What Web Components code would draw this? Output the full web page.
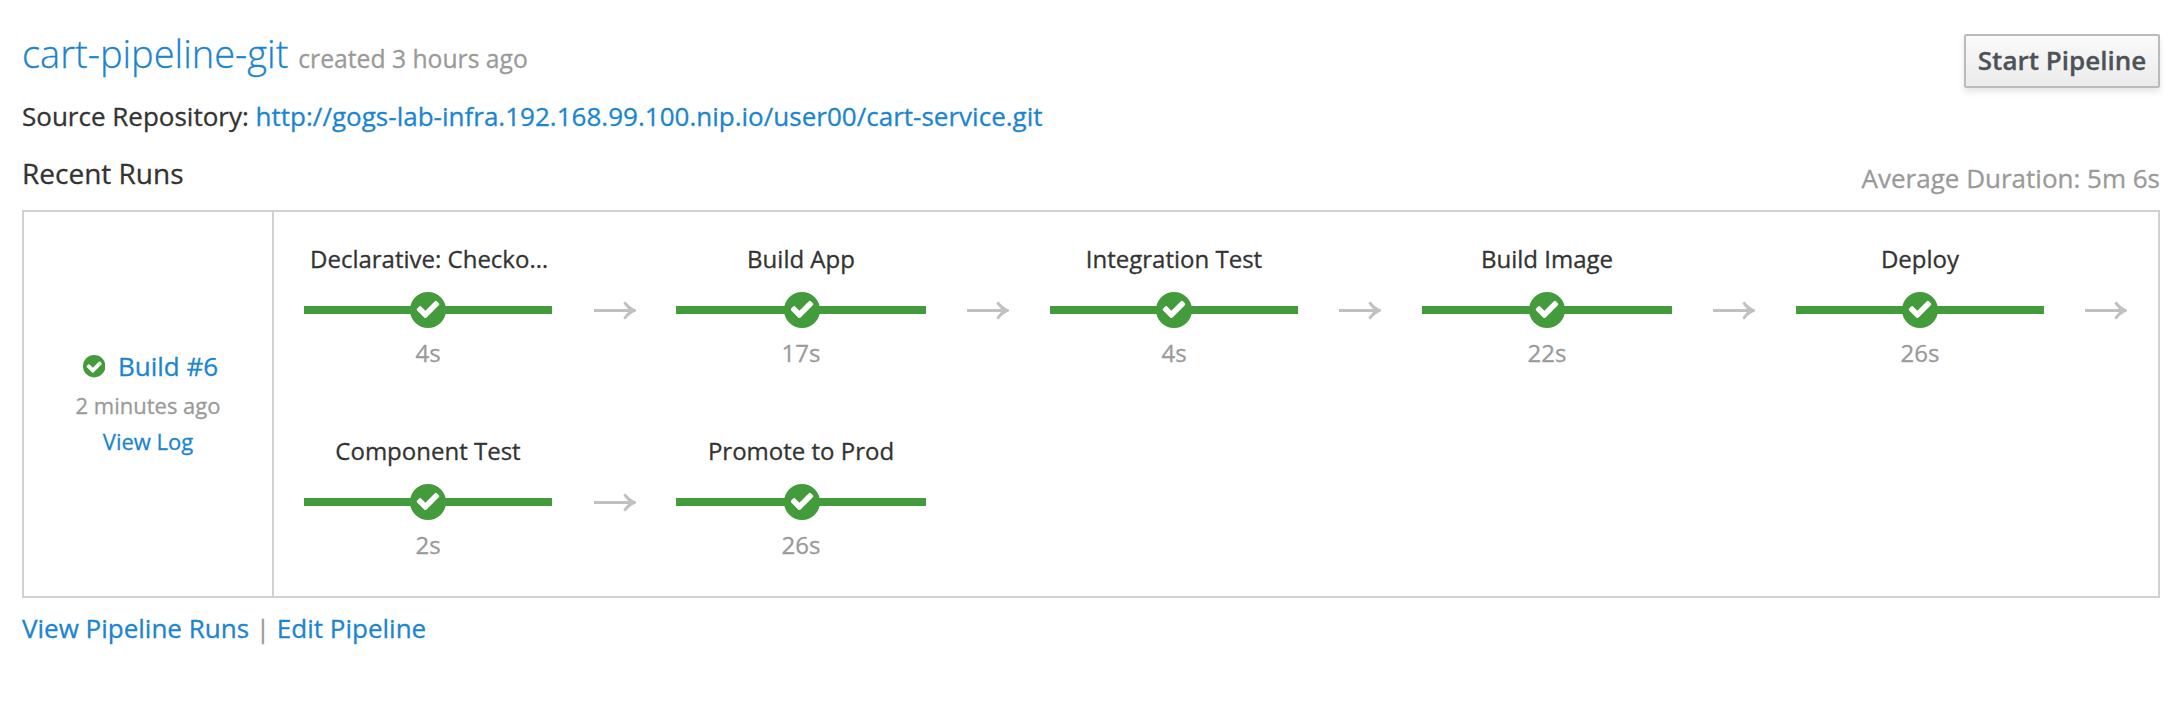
<!DOCTYPE html>
<html lang="en">
<head>
<meta charset="utf-8">
<title>Pipelines</title>
<style>
  body { margin: 0; background: #fff; font-family: "Open Sans", sans-serif; font-size: 26px; line-height: 44px; color: #333;
    -webkit-text-stroke: .3px;
    --link: #1b85d0; --muted: #9a9a9a; --line: #d1d1d1; --ok: #449b3b; }
</style>
</head>
<body>
<pipeline-card>
  <pipeline-heading slot="title" age="created 3 hours ago">cart-pipeline-git</pipeline-heading>
  <action-button slot="action">Start Pipeline</action-button>
  <span slot="source">Source Repository: <text-link style="letter-spacing:.012px">http://gogs-lab-infra.192.168.99.100.nip.io/user00/cart-service.git</text-link></span>
  <span slot="average">Average Duration: 5m 6s</span>
  <pipeline-run slot="runs" name="Build #6" age="2 minutes ago">
    <pipeline-stage duration="4s">Declarative: Checkout SCM</pipeline-stage>
    <pipeline-stage duration="17s">Build App</pipeline-stage>
    <pipeline-stage duration="4s">Integration Test</pipeline-stage>
    <pipeline-stage duration="22s">Build Image</pipeline-stage>
    <pipeline-stage duration="26s">Deploy</pipeline-stage>
    <pipeline-stage duration="2s">Component Test</pipeline-stage>
    <pipeline-stage duration="26s" last>Promote to Prod</pipeline-stage>
  </pipeline-run>
  <text-link slot="links">View Pipeline Runs</text-link>
  <text-link slot="links">Edit Pipeline</text-link>
</pipeline-card>
<script>
const define = (name, render) => customElements.define(name, class extends HTMLElement {
  constructor() {
    super();
    this.attachShadow({ mode: 'open' });
  }
  connectedCallback() {
    this.shadowRoot.innerHTML = render(this);
  }
});

define('text-link', () => `
  <style>:host { display: inline; color: var(--link); cursor: pointer; }</style><slot></slot>`);

define('pipeline-heading', el => `
  <style>
    :host { display: block; font-size: 38px; font-weight: 300; line-height: 46px; white-space: nowrap; color: var(--link); }
    small { font-size: 24.7px; font-weight: 400; color: var(--muted); }
  </style><slot></slot> <small>${el.getAttribute('age')}</small>`);

define('action-button', () => `
  <style>
    :host { display: block; }
    button { display: block; box-sizing: border-box; width: 196px; height: 54px; padding: 0 0 2px; margin: 0;
      border: 2px solid #bbb; border-radius: 2px; font: 600 26px/44px "Open Sans", sans-serif; color: #4d5258;
      background: linear-gradient(#fafafa, #ebebeb); box-shadow: 0 4px 6px rgba(3, 3, 3, .1); white-space: nowrap; }
  </style><button><slot></slot></button>`);

define('pipeline-card', () => `
  <style>
    :host { display: block; padding: 30px 20px 0 22px; }
    header { display: flex; justify-content: space-between; align-items: flex-start; height: 64px; }
    ::slotted([slot=action]) { margin-top: 4px; }
    .source { height: 57px; }
    .bar { display: flex; justify-content: space-between; height: 59px; }
    h3 { margin: 0; font-size: 28px; font-weight: 400; }
    .avg { margin-top: 5px; color: var(--muted); }
    footer { margin-top: 8px; }
    .sep { color: var(--muted); }
  </style>
  <header><slot name="title"></slot><slot name="action"></slot></header>
  <div class="source"><slot name="source"></slot></div>
  <div class="bar"><h3>Recent Runs</h3><div class="avg"><slot name="average"></slot></div></div>
  <slot name="runs"></slot>
  <footer></footer>`);

define('status-icon', () => `
  <style>:host { display: block; width: 22.4px; height: 22.4px; } svg { display: block; width: 100%; height: 100%; }</style>
  <svg viewBox="0 0 1536 1536"><circle cx="768" cy="768" r="768" fill="var(--ok)"/>
  <path fill="#fff" d="M1284 606q0-28-18-46l-91-90q-19-19-45-19t-45 19l-408 407-226-226q-19-19-45-19t-45 19l-91 90q-18 18-18 46 0 27 18 45l362 362q19 19 45 19 27 0 46-19l543-543q18-18 18-45z"/></svg>`);

define('pipeline-run', el => `
  <style>
    :host { display: flex; border: 2px solid var(--line); }
    aside { width: 248px; flex: none; border-right: 2px solid var(--line); padding-top: 132px; box-sizing: content-box; text-align: center; }
    .name { display: flex; justify-content: center; align-items: center; gap: 12.6px; padding-left: 5px; height: 43px; }
    status-icon { margin-top: 2px; }
    .small { font-size: 22px; line-height: 36px; }
    .age { color: var(--muted); }
    .stages { flex: 1; display: grid; grid-template-columns: 372fr 374fr 372fr 374fr 372fr; grid-auto-rows: 192px; padding: 0 10px; }
  </style>
  <aside>
    <div class="name"><status-icon></status-icon><text-link>${el.getAttribute('name')}</text-link></div>
    <div class="small age">${el.getAttribute('age')}</div>
    <div class="small"><text-link>View Log</text-link></div>
  </aside>
  <div class="stages"><slot></slot></div>`);

define('pipeline-stage', el => `
  <style>
    :host { display: grid; grid-template-columns: minmax(0, 1fr) 42px; column-gap: 42px; padding: 27px 20px 0;
      grid-template-rows: 40px 36px 40px; row-gap: 0; font-size: 24px; line-height: 40px; text-align: center; box-sizing: border-box; }
    .name { overflow: hidden; text-overflow: ellipsis; white-space: nowrap; padding: 0 4px; }
    :host(:first-child) .name { padding: 0 3px 0 6px; }
    .track { grid-row: 2; margin-top: 13px; height: 36px; display: flex; align-items: center; justify-content: center;
      background: linear-gradient(var(--ok), var(--ok)) center / 100% 8px no-repeat; }
    .dur { grid-row: 3; grid-column: 1; margin-top: 18px; color: var(--muted); }
    svg { display: block; }
    .arrow { grid-row: 2; grid-column: 2; margin: 13px 0 0 -.9px; }
    :host(:nth-child(5n+1)) .arrow { margin-left: 0; }
    :host(:nth-child(5n+2)) .track svg { margin-left: 1px; }
  </style>
  <div class="name"><slot></slot></div>
  <div class="track"><svg width="36" height="36" viewBox="0 0 36 36"><circle cx="18" cy="18" r="18" fill="var(--ok)"/>
    <path fill="#fff" transform="translate(5 3.95) scale(.01451)" d="M1671 566q0 40-28 68l-724 724-136 136q-28 28-68 28t-68-28l-136-136-362-362q-28-28-28-68t28-68l136-136q28-28 68-28t68 28l294 295 656-657q28-28 68-28t68 28l136 136q28 28 28 68z"/></svg></div>
  ${el.hasAttribute('last') ? '' : `<svg class="arrow" width="42" height="36" viewBox="0 0 42 36"><path fill="#c1c1c1" d="M0 17H34L29.4 11.6 30.6 9.8H31.8Q35.8 15.2 42 17.6V19.2Q35.8 21.6 31.8 27.2H30.6L29.4 25.4 34 20H0z"/></svg>`}
  <div class="dur">${el.getAttribute('duration')}</div>`);

// The footer lists the linked actions with a bar between each pair.
const card = document.querySelector('pipeline-card');
const links = [...card.querySelectorAll('[slot=links]')];
const footer = card.shadowRoot.querySelector('footer');
links.forEach((link, i) => {
  link.slot = 'link' + i;
  footer.insertAdjacentHTML('beforeend', `${i ? ' <span class="sep">|</span> ' : ''}<slot name="link${i}"></slot>`);
});
</script>
</body>
</html>
